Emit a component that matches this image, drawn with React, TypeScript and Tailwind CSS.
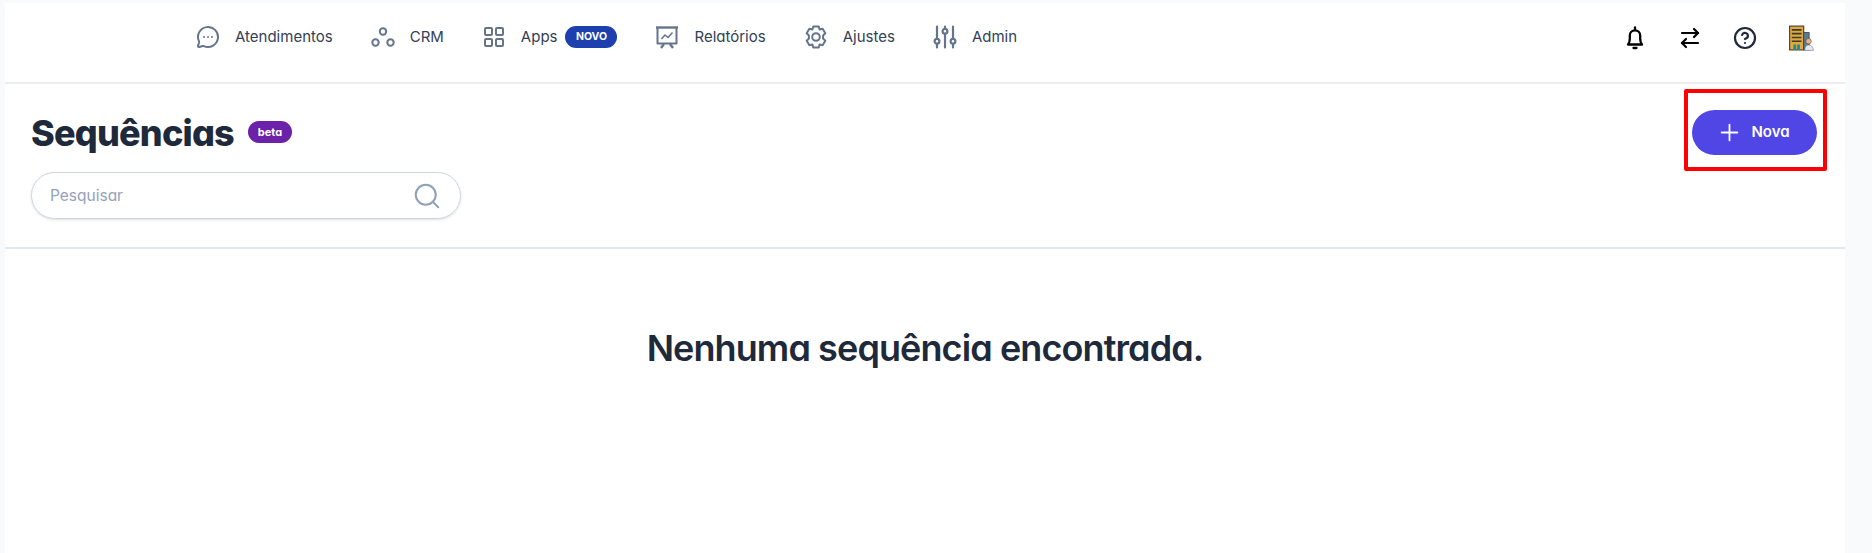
import { ArrowRightLeft, CircleHelp, LayoutGrid, MessageCircleMore, Plus, Search } from 'lucide-react';
import type { ReactNode } from 'react';

const iconClass = 'h-[24px] w-[24px] text-[#64748b]';

function CrmIcon() {
  return (
    <svg viewBox="0 0 24 24" fill="none" stroke="currentColor" strokeWidth="2" className={iconClass}>
      <circle cx="12" cy="6.500" r="3.200" />
      <circle cx="4.500" cy="17.500" r="3.200" />
      <circle cx="19.500" cy="17.500" r="3.200" />
    </svg>
  );
}

function ReportIcon() {
  return (
    <svg viewBox="0 0 24 24" fill="none" stroke="currentColor" strokeWidth="2" strokeLinejoin="round" className={iconClass}>
      <path d="M1 2.500h22" strokeWidth="2.400" />
      <path d="M2.500 3v15.500h19V3" />
      <path d="M6.500 14l3.500-4 3 2.500 4.500-5" strokeWidth="1.500" />
      <path d="M9 19l-3 4M15 19l3 4" strokeWidth="2.400" />
    </svg>
  );
}

function GearIcon() {
  return (
    <svg viewBox="0 0 24 24" fill="none" stroke="currentColor" strokeWidth="2" strokeLinejoin="round" className={iconClass}>
      <circle cx="12" cy="12" r="3.800" />
      <path d="M9.300 1.500h5.400l.9 3 3-.7 2.700 4.500-2.200 2.200v3l2.200 2.200-2.700 4.500-3-.7-.9 3H9.300l-.9-3-3 .7-2.700-4.500 2.200-2.200v-3L2.700 8.300l2.700-4.500 3 .7z" />
    </svg>
  );
}

function SlidersIcon() {
  return (
    <svg viewBox="0 0 24 24" fill="none" stroke="currentColor" strokeWidth="2.200" strokeLinecap="round" className={iconClass}>
      <path d="M4 1.500v12M4 19v3.500M12 1.500v2M12 9V22.500M20 1.500v12M20 19v3.500" />
      <circle cx="4" cy="16.300" r="2.400" />
      <circle cx="12" cy="6.300" r="2.400" />
      <circle cx="20" cy="16.300" r="2.400" />
    </svg>
  );
}

function BellIcon() {
  return (
    <svg viewBox="0 0 24 24" fill="none" stroke="black" strokeWidth="2.300" strokeLinejoin="round" strokeLinecap="round" className="h-[24px] w-[24px]">
      <path d="M12 1.500v2" />
      <path d="M5 18.500c1.200-1.500 1.800-3 1.800-5.500V9.500a5.200 5.200 0 0 1 10.400 0V13c0 2.500.6 4 1.800 5.500z" />
      <path d="M10.500 22h3" />
    </svg>
  );
}

function CompanyIcon() {
  return (
    <svg viewBox="0 0 24 24" className="h-[26px] w-[26px]">
      <rect x="1.500" y="1" width="13" height="22" fill="#e0a93f" stroke="#3f3a2c" strokeWidth="1" />
      <path d="M3.500 4.500h9M3.500 8h9M3.500 11.500h9M3.500 15h9" stroke="#3f3a2c" strokeWidth="1.500" />
      <rect x="5" y="18" width="2.500" height="5" fill="#1f8a96" />
      <rect x="8.500" y="18" width="2.500" height="5" fill="#1f8a96" />
      <rect x="14.500" y="7" width="5" height="16" fill="#5b7a94" stroke="#33475a" strokeWidth="0.800" />
      <circle cx="19" cy="15" r="2.500" fill="#e8b58c" stroke="#5a4030" strokeWidth="0.500" />
      <path d="M15.500 23.500c0-3.500 1.500-5 3.500-5s4.500 1.500 4.500 5z" fill="#e5e7eb" stroke="#6b7280" strokeWidth="0.500" />
    </svg>
  );
}

function NavItem({ icon, label, badge }: { icon: ReactNode; label: string; badge?: string }) {
  return (
    <a href="#" className="flex items-center">
      {icon}
      <span className="ml-[15px] text-[15px] leading-none text-[#334155]">{label}</span>
      {badge && (
        <span className="ml-[8px] flex h-[22px] w-[52px] items-center justify-center rounded-full bg-[#1e40af] text-[10.500px] font-bold text-white">
          {badge}
        </span>
      )}
    </a>
  );
}

export default function App() {
  return (
    <div className="h-screen overflow-hidden bg-[#f8fafc] pt-[3px] pl-[5px] pr-[27px] font-['Inter',sans-serif] [font-feature-settings:'cv11']">
      <div className="h-full bg-white">
        {/* Top nav */}
        <header className="flex h-[81px] items-center justify-between border-b-2 border-[#ebedf0] pt-0 pr-[31px] pb-[10px] pl-[191px]">
          <nav className="flex items-center gap-[38px] pb-[2px]">
            <NavItem icon={<MessageCircleMore className={iconClass} strokeWidth={2} />} label="Atendimentos" />
            <NavItem icon={<CrmIcon />} label="CRM" />
            <NavItem icon={<LayoutGrid className={iconClass} strokeWidth={2} />} label="Apps" badge="NOVO" />
            <NavItem icon={<ReportIcon />} label="Relatórios" />
            <NavItem icon={<GearIcon />} label="Ajustes" />
            <NavItem icon={<SlidersIcon />} label="Admin" />
          </nav>
          <div className="flex items-center gap-[31px]">
            <BellIcon />
            <ArrowRightLeft className="h-[24px] w-[24px] text-black" strokeWidth={2.200} />
            <CircleHelp className="h-[24px] w-[24px] text-[#1e293b]" strokeWidth={2.200} />
            <CompanyIcon />
          </div>
        </header>

        {/* Page heading */}
        <section className="flex h-[165px] justify-between border-b-2 border-[#e2e8f0] pr-[28px] pl-[26px]">
          <div className="pt-[22px]">
            <div className="flex items-center">
              <h1 className="text-[36px] leading-[54px] font-extrabold tracking-[-0.8px] text-[#1e293b]">Sequências</h1>
              <span className="mb-[2px] ml-[14px] flex h-[22px] w-[44px] items-center justify-center rounded-full bg-[#6b21a8] text-[11px] font-bold text-white">
                beta
              </span>
            </div>
            <div className="mt-[12px] flex h-[47px] w-[430px] items-center justify-between rounded-full border border-[#cbd5e1] pr-[18px] pl-[18px] shadow-sm">
              <span className="text-[15.500px] text-[#94a3b8]">Pesquisar</span>
              <Search className="h-[30px] w-[30px] text-[#8da2b8]" strokeWidth={1.600} />
            </div>
          </div>
          <div className="relative mt-[26px] h-[45px]">
            <button className="flex h-[45px] w-[125px] items-center justify-center gap-[8px] rounded-full bg-[#4f46e5] pr-[3px] text-[15px] font-semibold text-white">
              <Plus className="h-[27px] w-[27px]" strokeWidth={1.600} />
              Nova
            </button>
            {/* Red annotation around the button */}
            <div className="absolute -top-[21px] -right-[10px] -bottom-[16px] -left-[8px] rounded-[2px] border-4 border-[#ff0000]" />
          </div>
        </section>

        <p className="pt-[72px] text-center text-[36px] leading-[54px] font-semibold tracking-tight text-[#1e293b]">
          Nenhuma sequência encontrada.
        </p>
      </div>
    </div>
  );
}
